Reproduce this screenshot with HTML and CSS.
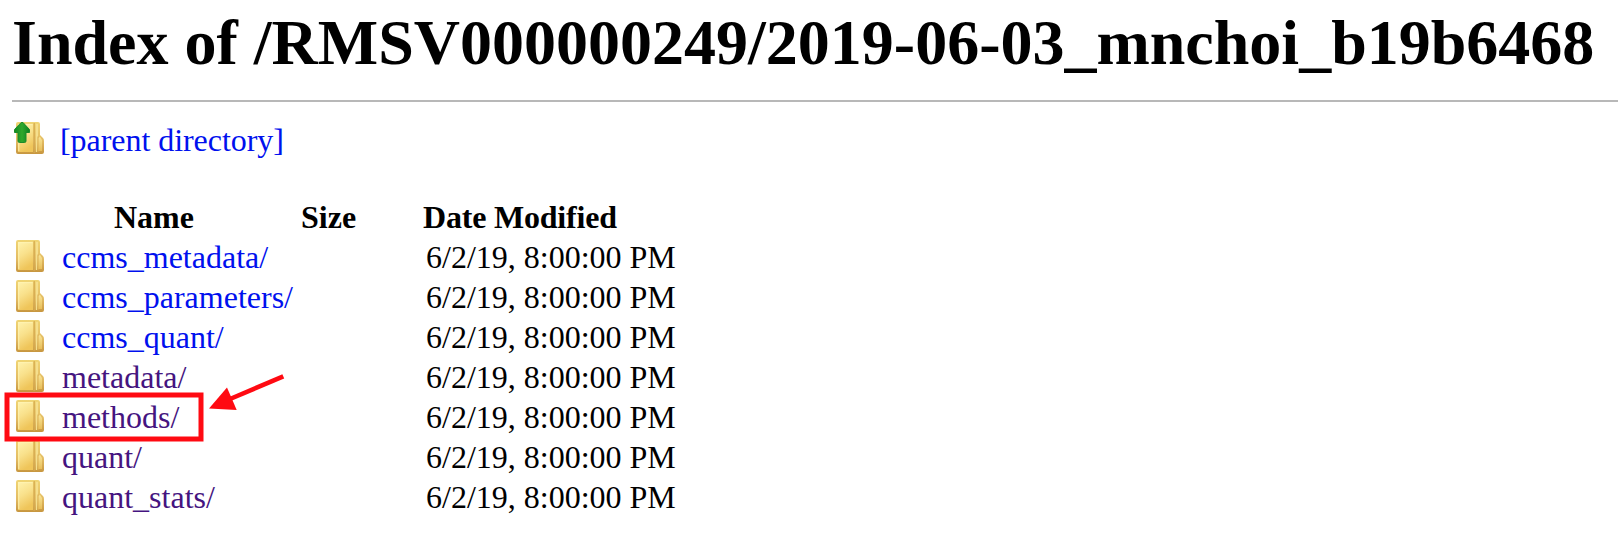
FILE: index.html
```html
<!DOCTYPE html>
<html lang="en">
<head>
<meta charset="utf-8">
<title>Index of /RMSV000000249/2019-06-03_mnchoi_b19b6468</title>
<link rel="stylesheet" href="styles.css">
</head>
<body>
<svg class="defs" width="0" height="0" aria-hidden="true">
  <defs>
    <linearGradient id="body" x1="0" y1="0" x2=".35" y2="1">
      <stop offset="0" stop-color="#fff3ae"/><stop offset=".5" stop-color="#f9e18c"/><stop offset="1" stop-color="#efc55a"/>
    </linearGradient>
    <linearGradient id="edge" x1="0" y1="0" x2="0" y2="1">
      <stop offset="0" stop-color="#f0d574"/><stop offset=".6" stop-color="#e3bb62"/><stop offset="1" stop-color="#c7963f"/>
    </linearGradient>
    <linearGradient id="tab" x1="0" y1="0" x2="0" y2="1">
      <stop offset="0" stop-color="#f8e496"/><stop offset="1" stop-color="#e8be59"/>
    </linearGradient>
    <linearGradient id="arrow" x1="0" y1="0" x2="1" y2="0">
      <stop offset="0" stop-color="#128a20"/><stop offset=".5" stop-color="#2fa82c"/><stop offset="1" stop-color="#0d821f"/>
    </linearGradient>
    <symbol id="folder" viewBox="0 0 32 32">
      <path d="M4 0H24Q26 0 26 2V13L29 16Q30 17 30 19V30Q30 32 28 32H4Q2 32 2 30V2Q2 0 4 0Z" fill="url(#edge)"/>
      <path d="M4 2H19V30H4Z" fill="url(#body)"/>
      <path d="M4.7 29V2.7H18.5" fill="none" stroke="#fff4b5" stroke-opacity=".65" stroke-width="1.3"/>
      <path d="M21.8 2H24V14L23 30H21.8Z" fill="#f5df8d"/>
      <path d="M24 16L26 15L28 18V29H24Z" fill="url(#tab)"/>
      <path d="M20.2 1V31" stroke="#d6aa4f" stroke-width="1.2"/>
      <path d="M24 14.5V30" stroke="#dbb052" stroke-width="1"/>
    </symbol>
  </defs>
</svg>
<h1 class="title">Index of /RMSV000000249/2019-06-03_mnchoi_b19b6468</h1>
<hr class="rule">
<div class="parent">
  <svg class="icon" viewBox="0 0 32 32"><use href="#folder"/><path d="M7.2 .5H9L15.5 7.5V10.5H12V19Q12 20.5 10.5 20.5H5.5Q4 20.5 4 19V10.5H.5V7.5Z" fill="url(#arrow)" stroke="#1b8a2a" stroke-width="1"/></svg>
  <a class="link">[parent directory]</a>
</div>
<div class="listing">
  <div class="row head"><span></span><span class="name">Name</span><span class="size">Size</span><span class="date">Date Modified</span></div>
  <div class="row"><svg class="icon"><use href="#folder"/></svg><a class="link">ccms_metadata/</a><span></span><span>6/2/19, 8:00:00 PM</span></div>
  <div class="row"><svg class="icon"><use href="#folder"/></svg><a class="link">ccms_parameters/</a><span></span><span>6/2/19, 8:00:00 PM</span></div>
  <div class="row"><svg class="icon"><use href="#folder"/></svg><a class="link">ccms_quant/</a><span></span><span>6/2/19, 8:00:00 PM</span></div>
  <div class="row"><svg class="icon"><use href="#folder"/></svg><a class="link visited">metadata/</a><span></span><span>6/2/19, 8:00:00 PM</span></div>
  <div class="row"><svg class="icon"><use href="#folder"/></svg><a class="link visited">methods/</a><span></span><span>6/2/19, 8:00:00 PM</span></div>
  <div class="row"><svg class="icon"><use href="#folder"/></svg><a class="link visited">quant/</a><span></span><span>6/2/19, 8:00:00 PM</span></div>
  <div class="row"><svg class="icon"><use href="#folder"/></svg><a class="link visited">quant_stats/</a><span></span><span>6/2/19, 8:00:00 PM</span></div>
</div>
<svg class="callout" width="300" height="90" viewBox="0 360 300 90">
  <rect x="7" y="395" width="194" height="44" fill="none" stroke="#ff0a12" stroke-width="5"/>
  <path d="M230 399L283.3 376.4" stroke="#ff0a12" stroke-width="4.6"/>
  <path d="M209 408.5L227 387.5L236.7 410Z" fill="#ff0a12"/>
</svg>
</body>
</html>
```
FILE: styles.css
```css
body {
  position: relative;
  margin: 0;
  padding: 7px 0 0 12px;
  height: 527px;
  overflow: hidden;
  background: #fff;
  color: #000;
  font: 32px/40px "Liberation Serif", "Times New Roman", serif;
}

.defs { position: absolute; }

.title {
  margin: 0;
  font-size: 64px;
  line-height: 72px;
  white-space: nowrap;
}

.rule {
  margin: 21px 0 0;
  border: 0;
  height: 2px;
  background: #b8b8b8;
}

.parent {
  display: flex;
  margin-top: 18px;
  height: 40px;
}

.parent .icon { margin: 2px 14px 0 2px; }

.icon {
  display: block;
  width: 32px;
  height: 32px;
}

.listing { margin-top: 37px; }

.row {
  display: grid;
  grid-template-columns: 48px 240px 124px 300px;
  height: 40px;
  padding-left: 2px;
  white-space: nowrap;
}

.row .icon { margin-top: 3px; }

.head { font-weight: bold; }
.head .name { padding-left: 52px; }
.head .size { margin-left: -1px; }
.head .date { margin-left: -3px; letter-spacing: -0.2px; }

.parent .link { letter-spacing: -0.05px; }

.link { color: #0010ee; }
.visited { color: #451480; }

.callout {
  position: absolute;
  left: 0;
  top: 360px;
}
```
